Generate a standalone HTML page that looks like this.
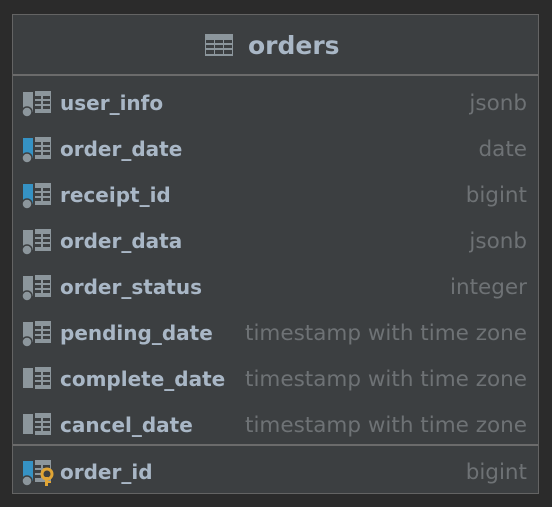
<!DOCTYPE html><html><head><style>
body{margin:0;width:552px;height:507px;background:#2b2b2b;font-family:"DejaVu Sans",sans-serif;overflow:hidden}
.box{position:absolute;left:12px;top:14px;width:525px;height:478px;background:#3c3f41;border:1px solid #646464}
.hdr{position:absolute;left:0;top:0;width:525px;height:59px;border-bottom:2px solid #6b6b6b}
.title{position:absolute;left:235px;top:16px;font-weight:bold;font-size:25px;color:#a9b7c6}
.row{position:absolute;left:0;width:525px;height:46px}
.n{position:absolute;left:47px;top:12px;font-weight:bold;font-size:20px;color:#a9b7c6}
.t{position:absolute;right:11px;top:12px;font-size:21.5px;color:#6e7275}
.sep{position:absolute;left:0;top:429px;width:525px;height:2px;background:#6b6b6b}
svg{position:absolute}
</style></head><body><div class="box">
<div class="hdr"><svg style="left:192px;top:19px" width="30" height="24" viewBox="0 0 30 24"><rect x="0" y="0" width="28" height="22" fill="#8c969c"/><g fill="#3c3f41"><rect x="1" y="6" width="8" height="3"/><rect x="10" y="6" width="8" height="3"/><rect x="19" y="6" width="8" height="3"/><rect x="1" y="11" width="8" height="3"/><rect x="10" y="11" width="8" height="3"/><rect x="19" y="11" width="8" height="3"/><rect x="1" y="16" width="8" height="4"/><rect x="10" y="16" width="8" height="4"/><rect x="19" y="16" width="8" height="4"/></g></svg><div class="title">orders</div></div>
<div id="rows"></div>
<div class="sep"></div>
</div>
<script>
var d=[["user_info","jsonb","#8c969c",1],["order_date","date","#3592c4",1],["receipt_id","bigint","#3592c4",1],["order_data","jsonb","#8c969c",1],["order_status","integer","#8c969c",1],["pending_date","timestamp with time zone","#8c969c",1],["complete_date","timestamp with time zone","#8c969c",0],["cancel_date","timestamp with time zone","#8c969c",0]];
var h="";
function icon(c,dot,key){var s='<svg style="left:8px;top:12px" width="34" height="26" viewBox="0 0 34 26"><rect x="2" y="1" width="10" height="20" fill="'+c+'"/>';
s+='<rect x="14" y="0" width="16" height="22" fill="#8c969c"/><g fill="#3c3f41"><rect x="14" y="5" width="6" height="3"/><rect x="22" y="5" width="7" height="3"/><rect x="14" y="10" width="6" height="3"/><rect x="22" y="10" width="7" height="3"/><rect x="14" y="15" width="6" height="3"/><rect x="22" y="15" width="7" height="3"/></g>';
if(dot)s+='<circle cx="6" cy="21" r="5" fill="#8c969c" stroke="#3c3f41" stroke-width="1.5"/>';
if(key)s+='<circle cx="26" cy="14" r="5" fill="#3c3f41" stroke="#e0a535" stroke-width="3"/><rect x="24" y="17" width="3" height="9" fill="#e0a535"/><rect x="27" y="21" width="3" height="2" fill="#e0a535"/>';
return s+'</svg>';}
d.forEach(function(r,i){h+='<div class="row" style="top:'+(64+46*i)+'px">'+icon(r[2],r[3])+'<div class="n">'+r[0]+'</div><div class="t">'+r[1]+'</div></div>';});
h+='<div class="row" style="top:433px">'+icon("#3592c4",1,1)+'<div class="n">order_id</div><div class="t">bigint</div></div>';
document.getElementById("rows").innerHTML=h;
</script></body></html>
